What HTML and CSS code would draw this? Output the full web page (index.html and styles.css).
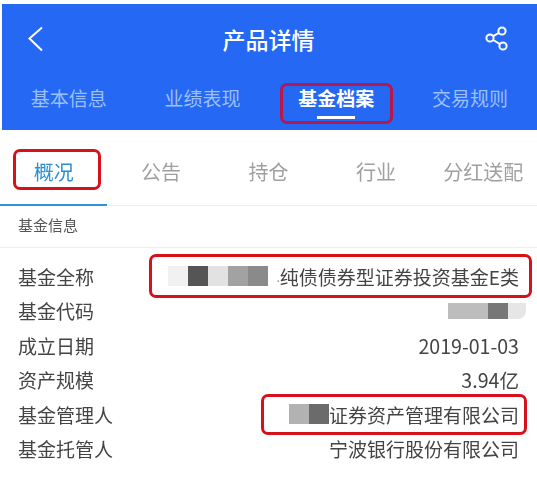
FILE: index.html
```html
<!DOCTYPE html>
<html lang="zh-CN">
<head>
    <meta charset="UTF-8">
    <meta name="viewport" content="width=device-width, initial-scale=1.0">
    <title>产品详情</title>
    <link rel="stylesheet" href="styles.css">
</head>
<body>
    <div class="page">
        <header class="top">
            <div class="title-bar">
                <svg class="back" width="18" height="28" viewBox="0 0 18 28">
                    <path d="M15 2.5 L2.5 13.5 L15 25.5" fill="none" stroke="#fff" stroke-width="2"/>
                </svg>
                <h1>产品详情</h1>
                <svg class="share" width="26" height="28" viewBox="0 0 26 28">
                    <g fill="none" stroke="#fff" stroke-width="2">
                        <circle cx="6" cy="13" r="3.6"/>
                        <circle cx="18" cy="6" r="3.6"/>
                        <circle cx="19" cy="21" r="3.6"/>
                        <path d="M9.2 11.2 L14.9 7.8 M9.2 15 L15.8 19"/>
                    </g>
                </svg>
            </div>
            <nav class="main-tabs">
                <a>基本信息</a>
                <a>业绩表现</a>
                <a class="on">基金档案<span class="mark box"></span></a>
                <a>交易规则</a>
            </nav>
        </header>

        <nav class="sub-tabs">
            <a class="on">概况<span class="mark box"></span></a>
            <a>公告</a>
            <a>持仓</a>
            <a>行业</a>
            <a>分红送配</a>
        </nav>

        <div class="section-title">基金信息</div>

        <div class="rows">
            <div class="row">
                <span>基金全称</span>
                <span class="value">
                    <i class="mosaic m1"></i><i class="mosaic m2"></i><i class="mosaic m3"></i><i class="mosaic m4"></i><i class="mosaic m5"></i>
                    <b class="dot">.</b>纯债债券型证券投资基金E类
                    <span class="mark box-name"></span>
                </span>
            </div>
            <div class="row">
                <span>基金代码</span>
                <span class="value code">
                    <i class="mosaic m6"></i><i class="mosaic m7"></i><i class="mosaic m8"></i>
                </span>
            </div>
            <div class="row">
                <span>成立日期</span>
                <span class="value number">2019-01-03</span>
            </div>
            <div class="row">
                <span>资产规模</span>
                <span class="value number">3.94亿</span>
            </div>
            <div class="row">
                <span>基金管理人</span>
                <span class="value">
                    <i class="mosaic m9"></i><i class="mosaic m10"></i>证券资产管理有限公司
                    <span class="mark box-manager"></span>
                </span>
            </div>
            <div class="row">
                <span>基金托管人</span>
                <span class="value">宁波银行股份有限公司</span>
            </div>
        </div>
    </div>
</body>
</html>
```

FILE: styles.css
```css
* {
    box-sizing: border-box;
}

body {
    margin: 0;
    background: #fff;
    font-family: "Noto Sans CJK SC", "Noto Sans", sans-serif;
    color: #444;
}

.page {
    width: 537px;
    height: 493px;
    padding-top: 4px;
    overflow: hidden;
    filter: blur(0.4px);
}

/* blue header */
.top {
    margin-left: 2px;
    height: 126px;
    background: #2568f4;
    color: #fff;
}

.title-bar {
    display: flex;
    align-items: center;
    justify-content: space-between;
    height: 70px;
    padding: 0 27px 0 25px;
}

.back {
    margin-right: 8px;
}

.title-bar h1 {
    margin: 0;
    font-size: 23px;
    font-weight: 500;
    line-height: 68px;
}

.main-tabs {
    display: flex;
    height: 56px;
}

.main-tabs a {
    position: relative;
    flex: 1;
    text-align: center;
    font-size: 19px;
    line-height: 48px;
    color: #9cc0fa;
}

.main-tabs a.on {
    color: #fff;
    font-weight: 700;
}

.main-tabs a.on::after {
    content: "";
    position: absolute;
    left: 47px;
    top: 42px;
    width: 38px;
    height: 3px;
    background: #fff;
}

/* second row of tabs */
.sub-tabs {
    display: flex;
    height: 76px;
    border-bottom: 1px solid #eee;
}

.sub-tabs a {
    position: relative;
    flex: 1;
    text-align: center;
    font-size: 20px;
    line-height: 84px;
    color: #a0a0a0;
}

.sub-tabs a.on {
    color: #2a8fd0;
}

.sub-tabs a.on::after {
    content: "";
    position: absolute;
    left: 0;
    bottom: -1px;
    width: 100%;
    height: 2px;
    background: #2a95d5;
}

.section-title {
    height: 42px;
    padding-left: 18px;
    font-size: 15px;
    line-height: 38px;
    color: #555;
    border-bottom: 1px solid #eee;
}

.rows {
    padding: 11px 18px 0;
}

.row {
    display: flex;
    justify-content: space-between;
    align-items: center;
    height: 34.5px;
    font-size: 19px;
}

.value {
    position: relative;
    display: flex;
    align-items: center;
    white-space: nowrap;
}

.number {
    font-size: 19.6px;
}

.dot {
    font-weight: 400;
    margin: 0 0 0 8px;
    font-size: 12px;
    color: #888;
}

/* blurred out parts of the text */
.mosaic {
    display: block;
    width: 20px;
    height: 20px;
}

.m1 { background: #f1f1f1; }
.m2 { background: #555; }
.m3 { background: #e2e2e2; }
.m4 { background: #a2a2a2; }
.m5 { background: #8a8a8a; }
.m6 { width: 40px; height: 16px; background: #bdbdbd; }
.m7 { height: 16px; background: #777; }
.m8 { width: 18px; height: 16px; background: #e6e6e6; border-radius: 0 0 8px 0; }
.m9 { background: #b2b2b2; }
.m10 { background: #6b6b6b; }

.code {
    margin-right: -7px;
}

/* red annotation boxes */
.mark {
    position: absolute;
    border: 3px solid #d5121c;
    border-radius: 7px;
}

.main-tabs .box {
    left: 10px;
    top: 9px;
    width: 113px;
    height: 41px;
    border-color: #b4184c;
}

.sub-tabs .box {
    left: 13px;
    top: 19px;
    width: 88px;
    height: 41px;
}

.box-name {
    left: -19px;
    right: -13px;
    top: -9px;
    bottom: -8px;
}

.box-manager {
    left: -28px;
    right: -8px;
    top: -7px;
    bottom: -7px;
}
```
